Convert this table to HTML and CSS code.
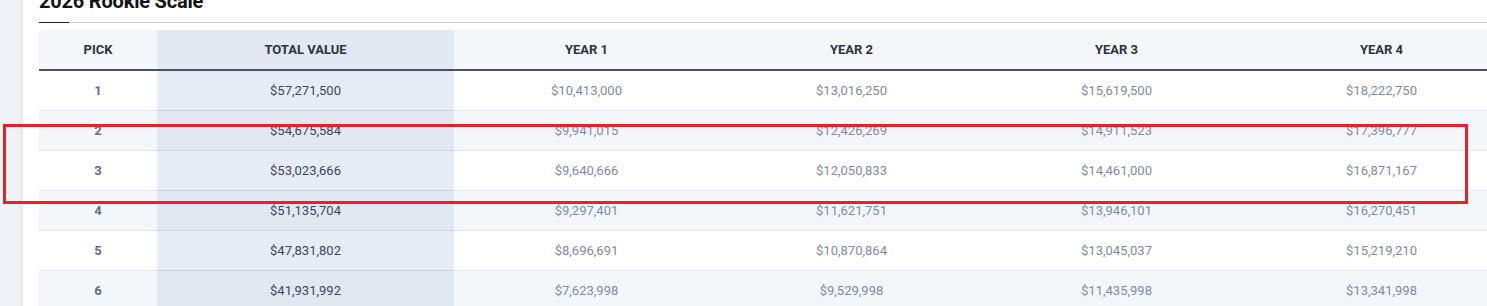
FILE: index.html
```html
<!DOCTYPE html>
<html lang="en">
<head>
<meta charset="utf-8">
<title>2026 Rookie Scale</title>
<link rel="stylesheet" href="styles.css">
</head>
<body>
<div class="page">
  <main class="card">
    <h2 class="title">2026 Rookie Scale</h2>
    <table class="scale">
      <colgroup>
        <col class="c-pick"><col class="c-total"><col class="c-year"><col class="c-year"><col class="c-year"><col class="c-year">
      </colgroup>
      <thead>
        <tr><th>Pick</th><th class="total">Total Value</th><th>Year 1</th><th>Year 2</th><th>Year 3</th><th>Year 4</th></tr>
      </thead>
      <tbody>
        <tr><td class="pick">1</td><td class="total">$57,271,500</td><td>$10,413,000</td><td>$13,016,250</td><td>$15,619,500</td><td>$18,222,750</td></tr>
        <tr><td class="pick">2</td><td class="total">$54,675,584</td><td>$9,941,015</td><td>$12,426,269</td><td>$14,911,523</td><td>$17,396,777</td></tr>
        <tr><td class="pick">3</td><td class="total">$53,023,666</td><td>$9,640,666</td><td>$12,050,833</td><td>$14,461,000</td><td>$16,871,167</td></tr>
        <tr><td class="pick">4</td><td class="total">$51,135,704</td><td>$9,297,401</td><td>$11,621,751</td><td>$13,946,101</td><td>$16,270,451</td></tr>
        <tr><td class="pick">5</td><td class="total">$47,831,802</td><td>$8,696,691</td><td>$10,870,864</td><td>$13,045,037</td><td>$15,219,210</td></tr>
        <tr><td class="pick">6</td><td class="total">$41,931,992</td><td>$7,623,998</td><td>$9,529,998</td><td>$11,435,998</td><td>$13,341,998</td></tr>
      </tbody>
    </table>
  </main>
  <div class="highlight" aria-hidden="true"></div>
</div>
</body>
</html>
```

FILE: styles.css
```css
html, body {
  margin: 0;
  padding: 0;
}
body {
  background: #f0f3f7;
  font-family: Roboto, "Liberation Sans", Arial, sans-serif;
  overflow: hidden;
  width: 1487px;
  height: 306px;
}
.page {
  position: relative;
  height: 306px;
  overflow: hidden;
}
.card {
  margin-left: 23px;
  margin-top: -11px;
  background: #ffffff;
  padding-left: 16px;
  box-shadow: -3px 0 6px rgba(40, 60, 90, 0.06);
  min-height: 330px;
}
.title {
  margin: 0;
  font-size: 20px;
  line-height: 24px;
  font-weight: 700;
  color: #111418;
  padding-bottom: 9px;
  border-bottom: 1px solid #cfcfcf;
  position: relative;
  letter-spacing: -0.2px;
}
.title::after {
  content: "";
  position: absolute;
  left: 0;
  bottom: -1px;
  width: 30px;
  height: 1px;
  background: #1c1f25;
}
.scale {
  margin-top: 7px;
  border-collapse: collapse;
  table-layout: fixed;
  width: 1475px;
}
.c-pick { width: 118px; }
.c-total { width: 297px; }
.c-year { width: 265px; }
.scale th {
  height: 39px;
  padding: 0;
  background: #f4f7fa;
  color: #2c3340;
  font-size: 13px;
  font-weight: 700;
  text-transform: uppercase;
  text-align: center;
  border-bottom: 2px solid #4a5163;
}
.scale th.total {
  background: #e3e9f2;
}
.scale td {
  height: 38px;
  padding: 0 0 1px;
  text-align: center;
  font-size: 13px;
  color: #7d8aa7;
  border-bottom: 1px solid #e2e6ec;
}
.scale tbody tr:nth-child(even) td {
  background: #f4f7fa;
}
.scale td.pick {
  font-weight: 700;
  color: #5d6d8e;
}
.scale td.total {
  color: #3b465e;
  background: #e6ecf5;
  border-bottom-color: #cdd3de;
}
.scale tbody tr:nth-child(even) td.total {
  background: #e2e8f1;
}
.highlight {
  position: absolute;
  left: 3px;
  top: 124px;
  width: 1465px;
  height: 80px;
  box-sizing: border-box;
  border: 3px solid #e8202a;
  pointer-events: none;
}
```
